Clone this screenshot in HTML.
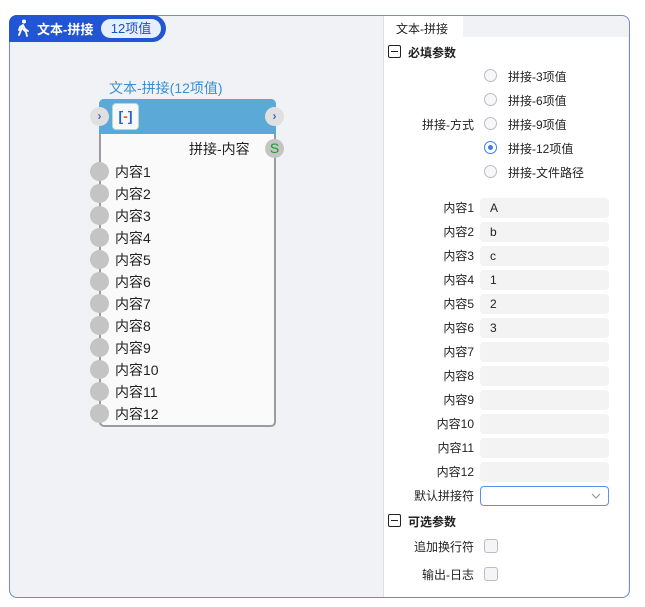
<!DOCTYPE html>
<html><head><meta charset="utf-8"><style>
*{box-sizing:border-box;margin:0;padding:0}
body{width:645px;height:607px;background:#fff;position:relative;font-family:"Liberation Sans","Noto Sans CJK SC",sans-serif;font-size:13px;color:#222;overflow:hidden}
.a{position:absolute}
#outer{left:9px;top:15px;width:621px;height:583px;border:1px solid #6f8ad6;border-radius:8px;background:#f0f2f5;overflow:hidden}
#right{left:383px;top:16px;width:245px;height:581px;background:#fff;border-left:1px solid #dcdfe4;border-radius:0 7px 7px 0}
.port{width:19px;height:19px;border-radius:50%;background:#c4c4c4}
.lbl{font-size:14px;color:#222}
.rl{width:90px;text-align:right;font-size:12px;color:#222}
.inp{left:480px;width:129px;height:20px;background:#f3f3f3;border-radius:4px;font-size:12px;padding-left:10px;line-height:20px}
.radio{width:13px;height:13px;border-radius:50%;border:1px solid #b8bcc6;background:#f7f7f8}
.cb{width:14px;height:14px;border-radius:3px;border:1px solid #b8bcc6;background:#f5f5f6}
.mn{width:13px;height:13px;border:1px solid #222;border-radius:2px}
.mn::after{content:"";position:absolute;left:2px;top:5px;width:7px;height:1px;background:#222}
</style></head><body>
<div id="outer" class="a"></div>
<div class="a" style="left:9px;top:15px;width:157px;height:27px;background:#2255d4;border-radius:8px 14px 14px 0"></div>
<svg class="a" style="left:16px;top:19px" width="16" height="18" viewBox="0 0 16 18"><circle cx="8" cy="2.5" r="2" fill="#fff"/><path d="M7 6L5 11L3 16M7 6L9 10L12 12M7 6L4 8L3 11M7 10L10 13L11 17" stroke="#fff" stroke-width="1.8" fill="none" stroke-linecap="round"/></svg>
<div class="a" style="left:37px;top:19px;color:#fff;font-weight:bold;font-size:13px">文本-拼接</div>
<div class="a" style="left:101px;top:19px;width:60px;height:19px;border-radius:10px;background:#e6efff;color:#1f4fc0;font-size:13px;text-align:center;line-height:19px">12项值</div>

<div class="a" style="left:109px;top:78px;color:#3a8fd0;font-size:14px">文本-拼接(12项值)</div>
<div class="a" style="left:99px;top:99px;width:177px;height:328px;background:#fafafa;border:2px solid #9c9c9c;border-radius:5px"></div>
<div class="a" style="left:99px;top:99px;width:177px;height:35px;background:#5aa9d6;border-radius:5px 5px 0 0"></div>
<div class="a" style="left:112px;top:103px;width:27px;height:27px;background:#f6f8fa;border-radius:4px;border:1px solid #b5dcc0;text-align:center;font-weight:bold;line-height:25px;font-size:14px;color:#2a5fd0">[<span style="color:#e54">-</span>]</div>
<div class="a port" style="left:90px;top:107px;background:#e0e0e0;color:#4a6acb;font-size:12px;text-align:center;line-height:19px;font-weight:bold">›</div>
<div class="a port" style="left:265px;top:107px;background:#e0e0e0;color:#4a6acb;font-size:12px;text-align:center;line-height:19px;font-weight:bold">›</div>
<div class="a lbl" style="left:189px;top:139px">拼接-内容</div>
<div class="a port" style="left:265px;top:139px;color:#1a9a2a;text-align:center;line-height:19px;font-size:14px">S</div>

<div class="a port" style="left:90px;top:162px"></div><div class="a lbl" style="left:115px;top:162px">内容1</div>
<div class="a port" style="left:90px;top:184px"></div><div class="a lbl" style="left:115px;top:184px">内容2</div>
<div class="a port" style="left:90px;top:206px"></div><div class="a lbl" style="left:115px;top:206px">内容3</div>
<div class="a port" style="left:90px;top:228px"></div><div class="a lbl" style="left:115px;top:228px">内容4</div>
<div class="a port" style="left:90px;top:250px"></div><div class="a lbl" style="left:115px;top:250px">内容5</div>
<div class="a port" style="left:90px;top:272px"></div><div class="a lbl" style="left:115px;top:272px">内容6</div>
<div class="a port" style="left:90px;top:294px"></div><div class="a lbl" style="left:115px;top:294px">内容7</div>
<div class="a port" style="left:90px;top:316px"></div><div class="a lbl" style="left:115px;top:316px">内容8</div>
<div class="a port" style="left:90px;top:338px"></div><div class="a lbl" style="left:115px;top:338px">内容9</div>
<div class="a port" style="left:90px;top:360px"></div><div class="a lbl" style="left:115px;top:360px">内容10</div>
<div class="a port" style="left:90px;top:382px"></div><div class="a lbl" style="left:115px;top:382px">内容11</div>
<div class="a port" style="left:90px;top:404px"></div><div class="a lbl" style="left:115px;top:404px">内容12</div>

<div id="right" class="a"></div>
<div class="a" style="left:463px;top:16px;width:165px;height:21px;background:#f0f2f5;border-radius:0 7px 0 0"></div>
<div class="a" style="left:396px;top:20px;font-size:12px">文本-拼接</div>
<div class="a mn" style="left:388px;top:45px"></div>
<div class="a" style="left:408px;top:44px;font-weight:bold;font-size:12px">必填参数</div>
<div class="a radio" style="left:484px;top:69px"></div><div class="a" style="left:508px;top:68px;font-size:12px">拼接-3项值</div>
<div class="a radio" style="left:484px;top:93px"></div><div class="a" style="left:508px;top:92px;font-size:12px">拼接-6项值</div>
<div class="a rl" style="left:384px;top:116px">拼接-方式</div>
<div class="a radio" style="left:484px;top:117px"></div><div class="a" style="left:508px;top:116px;font-size:12px">拼接-9项值</div>
<div class="a radio" style="left:484px;top:141px;border-color:#3d7cf0;background:#fff"><div class="a" style="left:3px;top:3px;width:5px;height:5px;border-radius:50%;background:#3d7cf0"></div></div><div class="a" style="left:508px;top:140px;font-size:12px">拼接-12项值</div>
<div class="a radio" style="left:484px;top:165px"></div><div class="a" style="left:508px;top:164px;font-size:12px">拼接-文件路径</div>

<div class="a rl" style="left:384px;top:199px">内容1</div><div class="a inp" style="top:198px">A</div>
<div class="a rl" style="left:384px;top:223px">内容2</div><div class="a inp" style="top:222px">b</div>
<div class="a rl" style="left:384px;top:247px">内容3</div><div class="a inp" style="top:246px">c</div>
<div class="a rl" style="left:384px;top:271px">内容4</div><div class="a inp" style="top:270px">1</div>
<div class="a rl" style="left:384px;top:295px">内容5</div><div class="a inp" style="top:294px">2</div>
<div class="a rl" style="left:384px;top:319px">内容6</div><div class="a inp" style="top:318px">3</div>
<div class="a rl" style="left:384px;top:343px">内容7</div><div class="a inp" style="top:342px"></div>
<div class="a rl" style="left:384px;top:367px">内容8</div><div class="a inp" style="top:366px"></div>
<div class="a rl" style="left:384px;top:391px">内容9</div><div class="a inp" style="top:390px"></div>
<div class="a rl" style="left:384px;top:415px">内容10</div><div class="a inp" style="top:414px"></div>
<div class="a rl" style="left:384px;top:439px">内容11</div><div class="a inp" style="top:438px"></div>
<div class="a rl" style="left:384px;top:463px">内容12</div><div class="a inp" style="top:462px"></div>
<div class="a rl" style="left:384px;top:487px">默认拼接符</div>
<div class="a" style="left:480px;top:486px;width:129px;height:20px;border:1px solid #5b8ef0;border-radius:4px"><svg class="a" style="left:110px;top:6px" width="10" height="7"><path d="M1 1L5 5L9 1" stroke="#999" fill="none" stroke-width="1.2"/></svg></div>
<div class="a mn" style="left:388px;top:514px"></div>
<div class="a" style="left:408px;top:513px;font-weight:bold;font-size:12px">可选参数</div>
<div class="a rl" style="left:384px;top:538px">追加换行符</div><div class="a cb" style="left:484px;top:539px"></div>
<div class="a rl" style="left:384px;top:566px">输出-日志</div><div class="a cb" style="left:484px;top:567px"></div>
</body></html>
